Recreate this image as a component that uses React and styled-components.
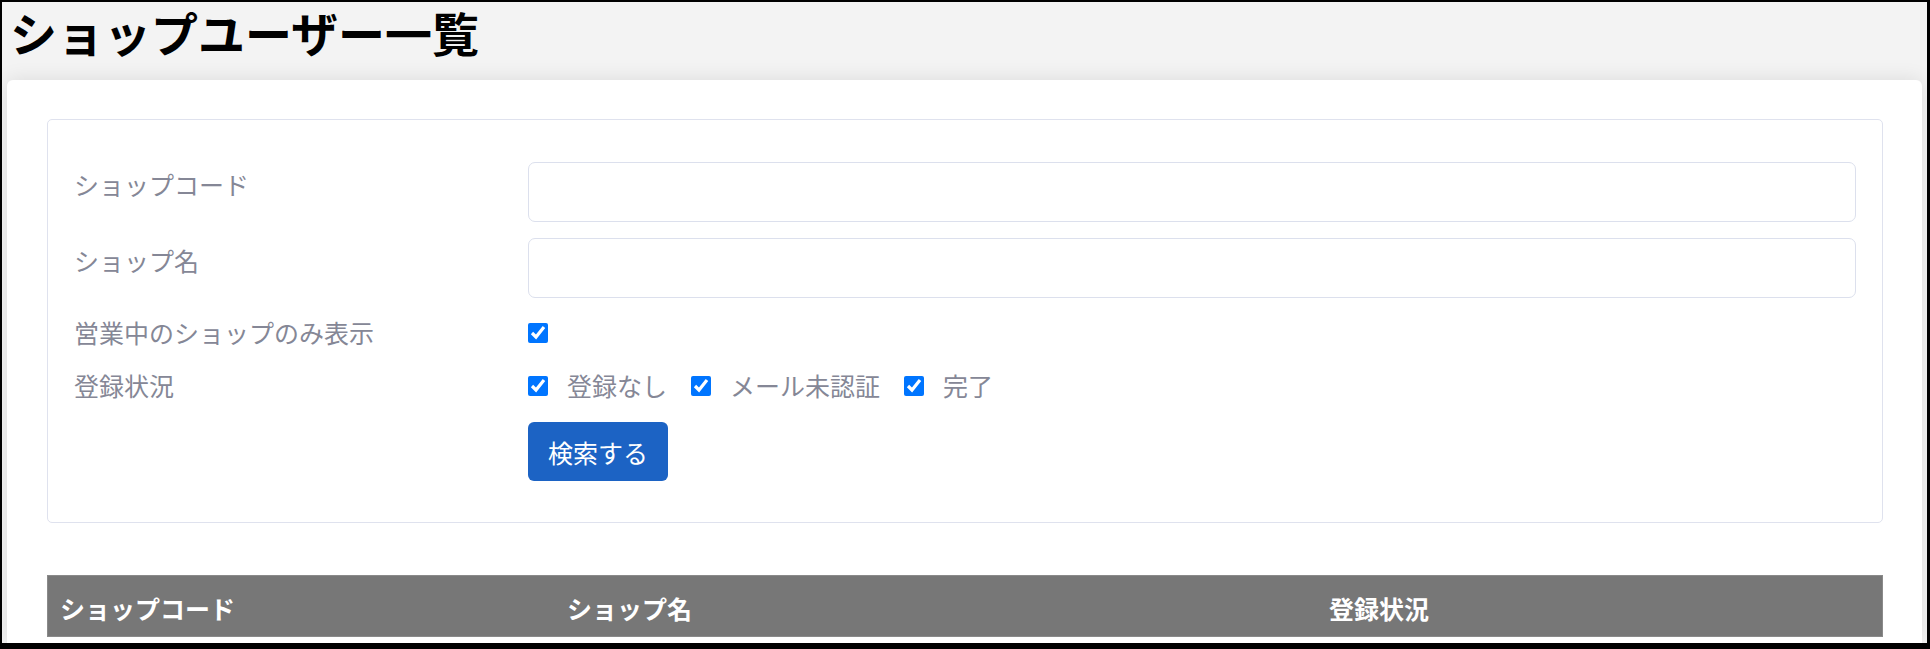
import React from "react";
import styled, { createGlobalStyle } from "styled-components";

const GlobalStyle = createGlobalStyle`
  body {
    margin: 0;
    font-family: "Noto Sans CJK JP", "Noto Sans", sans-serif;
  }
  * {
    box-sizing: border-box;
  }
`;

const statusOptions = ["登録なし", "メール未認証", "完了"];

const columns = [
  { key: "code", label: "ショップコード" },
  { key: "name", label: "ショップ名" },
  { key: "status", label: "登録状況" },
];

const App = () => {
  return (
    <Frame>
      <GlobalStyle />
      <Header>
        <Title>ショップユーザー一覧</Title>
      </Header>
      <Card>
        <SearchBox>
          <FormRow>
            <FieldLabel $padTop>ショップコード</FieldLabel>
            <TextInput type="text" />
          </FormRow>
          <FormRow>
            <FieldLabel $padTop>ショップ名</FieldLabel>
            <TextInput type="text" />
          </FormRow>
          <FormRow>
            <FieldLabel>営業中のショップのみ表示</FieldLabel>
            <CheckRow>
              <Check type="checkbox" defaultChecked />
            </CheckRow>
          </FormRow>
          <FormRow $gap={18}>
            <FieldLabel>登録状況</FieldLabel>
            <CheckRow>
              {statusOptions.map((option) => (
                <CheckItem key={option}>
                  <Check type="checkbox" defaultChecked />
                  <CheckText>{option}</CheckText>
                </CheckItem>
              ))}
            </CheckRow>
          </FormRow>
          <FormRow $gap={0}>
            <div />
            <div>
              <SearchButton type="button">検索する</SearchButton>
            </div>
          </FormRow>
        </SearchBox>

        <Table>
          <TableHead>
            {columns.map((col) => (
              <HeadCell key={col.key}>{col.label}</HeadCell>
            ))}
          </TableHead>
        </Table>
      </Card>
    </Frame>
  );
};

const Frame = styled.div`
  display: flex;
  flex-direction: column;
  width: 1930px;
  height: 649px;
  overflow: hidden;
  border-style: solid;
  border-color: #000;
  border-width: 2px 3px 6px 2px;
  background-color: #f3f3f3;
`;

const Header = styled.header`
  flex: 0 0 78px;
  padding: 0 8px;
`;

const Title = styled.h1`
  margin: -2px 0 0;
  font-size: 47px;
  font-weight: 700;
  line-height: 64px;
  color: #000;
`;

const Card = styled.main`
  flex: 1;
  margin: 0 5px;
  padding: 39px 39px 0 40px;
  background-color: #fff;
  border-radius: 6px 6px 0 0;
  box-shadow: 0 0 20px rgba(0, 0, 0, 0.1);
`;

const SearchBox = styled.form`
  padding: 42px 26px 41px;
  border: 1px solid #dfe2ee;
  border-radius: 5px;
`;

const FormRow = styled.div`
  display: grid;
  grid-template-columns: 454px 1fr;
  margin-bottom: ${(p) => (p.$gap ?? 16)}px;
`;

const FieldLabel = styled.label`
  padding-top: ${(p) => (p.$padTop ? "4px" : "0")};
  font-size: 25px;
  line-height: 37px;
  color: #858796;
`;

const TextInput = styled.input`
  width: 100%;
  height: 60px;
  padding: 0 16px;
  border: 1px solid #dce0ed;
  border-radius: 7px;
  font: inherit;
  font-size: 25px;
  outline: none;
`;

const CheckRow = styled.div`
  display: flex;
  align-items: center;
  height: 37px;
`;

const CheckItem = styled.label`
  display: flex;
  align-items: center;
  margin-right: 24px;
`;

const Check = styled.input`
  width: 20px;
  height: 20px;
  margin: 0;
  accent-color: #0075ff;
`;

const CheckText = styled.span`
  margin-left: 19px;
  font-size: 25px;
  line-height: 37px;
  color: #858796;
`;

const SearchButton = styled.button`
  height: 59px;
  padding: 0 20px;
  border: none;
  border-radius: 6px;
  background-color: #1c63c4;
  color: #fff;
  font-family: inherit;
  font-size: 25px;
  cursor: pointer;
`;

const Table = styled.div`
  margin-top: 52px;
`;

const TableHead = styled.div`
  display: grid;
  grid-template-columns: 507px 762px 1fr;
  align-items: center;
  height: 62px;
  padding-top: 4px;
  background-color: #777;
  border: 1px solid #8a8a8a;
`;

const HeadCell = styled.div`
  padding: 0 12px;
  font-size: 25px;
  font-weight: 700;
  color: #fff;
`;

export default App;
